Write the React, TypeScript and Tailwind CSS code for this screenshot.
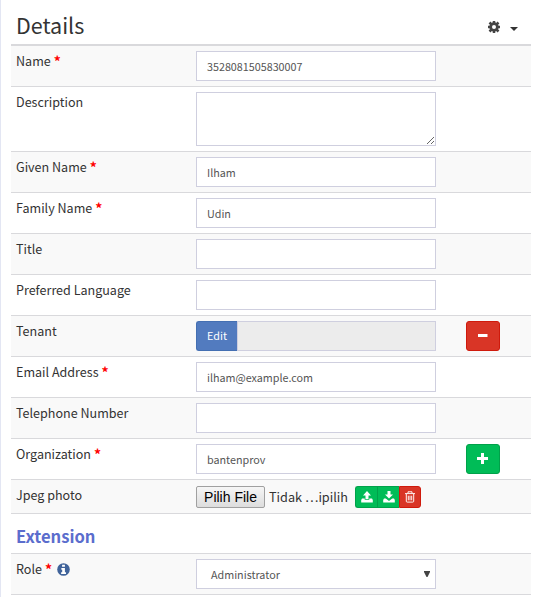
import type { ReactNode } from "react";

type RowProps = {
  label: string;
  required?: boolean;
  info?: boolean;
  shaded?: boolean;
  className?: string;
  action?: ReactNode;
  children: ReactNode;
};

function Row({ label, required, info, shaded, className = "h-[41px] border-t", action, children }: RowProps) {
  return (
    <div className={`flex items-start border-[#d9d9dc] pt-[5px] ${shaded ? "bg-[#f9f9f9]" : "bg-white"} ${className}`}>
      <div className="flex h-5 w-[185px] shrink-0 items-center whitespace-pre pl-[5px] text-[12.55px] leading-5 text-[#333]">
        {label}
        {required && <span className="ml-[3px] text-[14px] font-bold text-[#f00]">*</span>}
        {info && (
          <svg className="ml-[5px] h-[13px] w-[13px]" viewBox="0 0 12 12">
            <circle cx="6" cy="6" r="5.8" fill="#40639a" />
            <path d="M4.7 1.5h2.6v2H4.7zM4 4.5h3.3v4h1v1.7H3.8V8.5h1V6.2H4z" fill="#fff" />
          </svg>
        )}
      </div>
      <div className="w-60 shrink-0">{children}</div>
      {action && <div className="ml-[30px]">{action}</div>}
    </div>
  );
}

function Field({ value = "" }: { value?: string }) {
  return (
    <input
      defaultValue={value}
      className="block h-[30px] w-60 border border-[#cfcfdf] bg-white px-[10px] pt-px text-[10.75px] text-[#555] outline-none"
    />
  );
}

function SquareButton({ kind }: { kind: "plus" | "minus" }) {
  return (
    <button
      className={`flex h-[30px] w-[34px] items-center justify-center rounded-[3px] border ${
        kind === "plus" ? "border-[#00a14a] bg-[#00bc57]" : "border-[#cf1a0c] bg-[#d93526]"
      }`}
    >
      <svg className="h-3 w-3" viewBox="0 0 12 12" fill="#fff">
        <path d={kind === "plus" ? "M4 0h3v4h4v3H7v4H4V7H0V4h4z" : "M1 4h9.5v3H1z"} />
      </svg>
    </button>
  );
}

function FileActions() {
  return (
    <div className="ml-[7px] flex h-[22px] shrink-0">
      <button className="flex w-[22px] items-center justify-center rounded-l-[3px] border border-r-0 border-[#00a14a] bg-[#00bc57]">
        <svg className="h-3 w-3" viewBox="0 0 12 12" fill="#fff">
          <path d="M6 0 10 4.5H7.5V8h-3V4.5H2z" />
          <path d="M1 7.5h2.7v1.2h4.6V7.5H11l.8 1.5v2.5H.2V9z" />
        </svg>
      </button>
      <button className="flex w-[22px] items-center justify-center border border-r-0 border-[#00a14a] bg-[#00bc57]">
        <svg className="h-3 w-3" viewBox="0 0 12 12" fill="#fff">
          <path d="M4.5 0h3v3.5H10L6 7.5 2 3.5h2.5z" />
          <path d="M1 7.5h1.8L6 10l3.2-2.5H11l.8 1.5v2.5H.2V9z" />
        </svg>
      </button>
      <button className="flex w-[22px] items-center justify-center rounded-r-[3px] border border-[#cf1a0c] bg-[#d93526]">
        <svg className="h-3 w-3" viewBox="0 0 12 12" fill="none" stroke="#fff">
          <path d="M1 2.6h10M4 2.3V.8h4v1.5M2.3 3v7.2q0 .9.9.9h5.6q.9 0 .9-.9V3M4.3 4.7v4.6M6 4.7v4.6M7.7 4.7v4.6" strokeWidth=".95" />
        </svg>
      </button>
    </div>
  );
}

export default function App() {
  return (
    <div className="h-[597px] w-[542px] overflow-hidden border-l border-[#e3e6f3] bg-white pl-[10px] font-['Noto_Sans_CJK_SC','Noto_Sans',sans-serif]">
      <div className="w-[520px]">
        <header className="flex h-11 items-center justify-between pl-[5px] pr-[13px] pt-[9px]">
          <h1 className="mb-[3px] text-[21.5px] leading-[30px] text-[#333]">Details</h1>
          <div className="flex items-center gap-[10px]">
            <svg className="h-3 w-3" viewBox="0 0 12 12">
              <g stroke="#444" strokeWidth="2.5">
                <path d="M6 0v12M0 6h12M1.5 1.5l9 9M10.5 1.5l-9 9" />
              </g>
              <circle cx="6" cy="6" r="4.7" fill="#444" />
              <circle cx="6" cy="6" r="2" fill="#fff" />
            </svg>
            <svg className="mt-[4px] h-1 w-2" viewBox="0 0 8 4">
              <path d="M0 0h8L4 4z" fill="#333" />
            </svg>
          </div>
        </header>

        <Row label="Name" required shaded className="h-[42px] border-t-2"><Field value="3528081505830007" /></Row>
        <Row label="Description" className="h-[65px] border-t">
          <textarea className="block h-[54px] w-60 resize border border-[#cfcfdf] bg-white px-[10px] py-[5px] text-[10.75px] text-[#555] outline-none" />
        </Row>
        <Row label="Given Name" required shaded><Field value="Ilham" /></Row>
        <Row label="Family Name" required><Field value="Udin" /></Row>
        <Row label="Title" shaded><Field /></Row>
        <Row label="Preferred Language"><Field /></Row>
        <Row label="Tenant" shaded action={<SquareButton kind="minus" />}>
          <div className="flex h-[30px]">
            <button className="w-[41px] rounded-l-[3px] border border-r-0 border-[#446fb2] bg-[#527bbf] text-[10.75px] text-white">Edit</button>
            <div className="flex-1 border border-[#cfcfdf] bg-[#ececec]" />
          </div>
        </Row>
        <Row label="Email Address" required><Field value="ilham@example.com" /></Row>
        <Row label="Telephone Number" shaded><Field /></Row>
        <Row label="Organization" required action={<SquareButton kind="plus" />}><Field value="bantenprov" /></Row>
        <Row label="Jpeg photo" shaded className="h-[34px] border-t">
          <div className="flex pt-px">
            <button className="h-[22px] w-[69px] shrink-0 whitespace-nowrap rounded-[2px] border border-[#a0a0a0] bg-linear-to-b from-[#f6f6f6] to-[#dddddd] font-['Liberation_Sans',sans-serif] text-[14px] leading-5 text-black">Pilih File</button>
            <span className="ml-1 w-[79px] shrink-0 whitespace-nowrap text-[12.7px] leading-[22px] text-[#333]">Tidak …ipilih</span>
            <FileActions />
          </div>
        </Row>
        <div className="flex h-10 items-center border-t border-[#d9d9dc] pl-[5px] pt-[4px]">
          <h2 className="text-[16.6px] font-bold leading-6 text-[#5b6dcd]">Extension</h2>
        </div>
        <Row label="Role" required info shaded>
          <div className="flex h-[30px] items-center justify-between border border-[#cfcfdf] bg-white pl-[14px] pr-[5px] text-[10.75px] text-[#555]">
            <span className="pt-[2px]">Administrator</span>
            <svg className="h-[6px] w-[6px]" viewBox="0 0 6 6">
              <path d="M0 0h6v1L3.5 6h-1L0 1z" fill="#444" />
            </svg>
          </div>
        </Row>
        <div className="h-px bg-[#d9d9dc]" />
      </div>
    </div>
  );
}
